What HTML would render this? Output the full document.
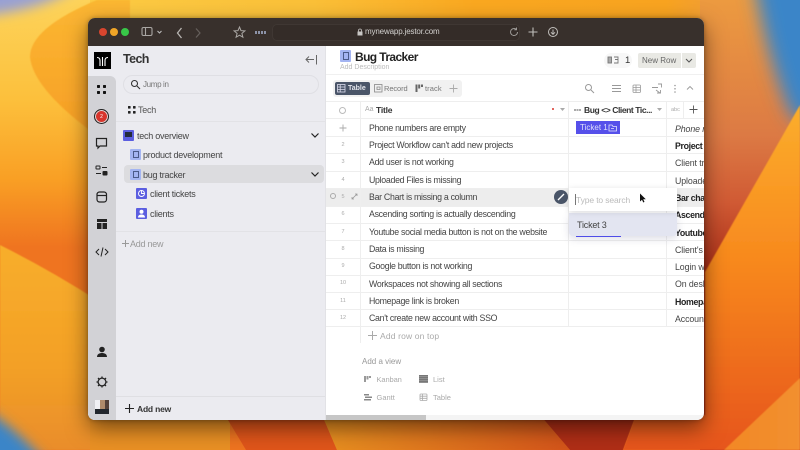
<!DOCTYPE html>
<html><head><meta charset="utf-8"><style>
html,body{margin:0;padding:0;width:800px;height:450px;overflow:hidden;background:#f09020}
*{box-sizing:border-box}
body{font-family:"Liberation Sans",sans-serif;position:relative}
#root{position:absolute;left:0;top:0;width:800px;height:450px;overflow:hidden}
.a{position:absolute}
.t{position:absolute;white-space:nowrap;line-height:12px;height:12px}
.r{font-size:8.8px;color:#444;letter-spacing:-.3px;left:369px}
.n{font-size:5.5px;color:#aaa;left:338px;width:10px;text-align:center}
.c{font-size:8.8px;color:#444;left:675px;letter-spacing:-.1px}
.b{font-weight:bold;color:#222;letter-spacing:-.35px}
.h{left:326px;right:0;height:1px;background:#eee}
.s{font-size:9px;color:#444;letter-spacing:-.25px}
.v{font-size:7.5px;color:#aaa}
#win{position:absolute;left:88px;top:18px;width:616px;height:402px;border-radius:7px;overflow:hidden;box-shadow:0 8px 22px rgba(0,0,0,.5),0 0 5px rgba(0,0,0,.3);background:#fff}
#in{position:absolute;left:-88px;top:-18px;width:800px;height:450px}
svg.i{position:absolute;overflow:visible}
</style></head><body><div id="root">
<svg class="a" style="left:0;top:0;overflow:hidden" width="800" height="450" viewBox="0 0 800 450">
<defs>
<linearGradient id="g1" x1="0" y1="0" x2="0" y2="1"><stop offset="0" stop-color="#fdd35a"/><stop offset=".22" stop-color="#fcc03c"/><stop offset=".4" stop-color="#f99f24"/><stop offset=".55" stop-color="#ef7420"/><stop offset="1" stop-color="#ef7420"/></linearGradient>
<linearGradient id="g2" x1="0" y1="0" x2="0" y2="1"><stop offset="0" stop-color="#fbb732"/><stop offset="1" stop-color="#f79f26"/></linearGradient>
<linearGradient id="g3" x1="0" y1="0" x2="0" y2="1"><stop offset="0" stop-color="#f8ae2c"/><stop offset=".6" stop-color="#f3a026"/><stop offset="1" stop-color="#e98d2c"/></linearGradient>
<linearGradient id="g4" x1="0" y1="0" x2="0" y2="1"><stop offset="0" stop-color="#ec9a40"/><stop offset=".3" stop-color="#dc7a44"/><stop offset=".45" stop-color="#d05a34"/><stop offset=".62" stop-color="#a82a15"/></linearGradient>
<linearGradient id="g5" x1="0" y1="0" x2="0" y2="1"><stop offset="0" stop-color="#fbae2c"/><stop offset=".45" stop-color="#f8891e"/><stop offset="1" stop-color="#e6551a"/></linearGradient>
<linearGradient id="g6" x1="0" y1="0" x2="1" y2="0"><stop offset="0" stop-color="#f38825"/><stop offset="1" stop-color="#f29030"/></linearGradient>
<linearGradient id="g7" x1="0" y1="0" x2="1" y2="0"><stop offset="0" stop-color="#fccb44"/><stop offset=".35" stop-color="#fbc038"/><stop offset=".6" stop-color="#faa820"/><stop offset=".9" stop-color="#f9a420"/><stop offset="1" stop-color="#ee9c3c"/></linearGradient>
<linearGradient id="g8" x1="0" y1="0" x2="1" y2="0"><stop offset="0" stop-color="#e89020"/><stop offset="1" stop-color="#d4541a"/></linearGradient>
<filter id="b4" filterUnits="userSpaceOnUse" x="-60" y="-60" width="920" height="570"><feGaussianBlur stdDeviation="6"/></filter>
<filter id="b8" filterUnits="userSpaceOnUse" x="-60" y="-60" width="920" height="570"><feGaussianBlur stdDeviation="9"/></filter>
<filter id="b1" filterUnits="userSpaceOnUse" x="-60" y="-60" width="920" height="570"><feGaussianBlur stdDeviation=".6"/></filter>
</defs>
<rect width="800" height="450" fill="url(#g1)"/>
<path d="M-20 -20H85Q50 10 -20 16Z" fill="#98a0d4" filter="url(#b4)"/>
<rect x="90" y="0" width="640" height="60" fill="url(#g7)"/>
<path d="M97 0Q30 28 30 57Q33 88 92 132L130 132V0Z" fill="url(#g2)" filter="url(#b1)"/>
<path d="M0 245Q50 270 100 302L100 450H0Z" fill="url(#g3)" filter="url(#b1)"/>
<rect x="90" y="415" width="140" height="35" fill="#e99024"/>
<path d="M225 415H322L337 450H246Z" fill="#e0551a"/>
<path d="M322 415H540L570 450H337Z" fill="url(#g8)"/>
<path d="M540 415H636L623 450H570Z" fill="#b02e16"/>
<path d="M-30 400Q15 425 52 470H-30Z" fill="#3a85c8" filter="url(#b4)"/>
<rect x="700" y="0" width="100" height="450" fill="url(#g4)"/>
<path d="M752 -30H840V130L792 118Q767 60 752 -30Z" fill="#3a85c8" filter="url(#b8)"/>
<path d="M800 105L705 272V415L636 415L623 450H800Z" fill="url(#g5)" filter="url(#b1)"/>
<path d="M800 378L724 450H800Z" fill="url(#g6)" filter="url(#b1)"/>
</svg>

<div id="win"><div id="in">
<!-- title bar -->
<div class="a" style="left:88px;top:18px;width:616px;height:28px;background:#38302c"></div>
<div class="a" style="left:99px;top:28px;width:8px;height:8px;border-radius:50%;background:#d8452e"></div>
<div class="a" style="left:110px;top:28px;width:8px;height:8px;border-radius:50%;background:#f0a527"></div>
<div class="a" style="left:121px;top:28px;width:8px;height:8px;border-radius:50%;background:#38c748"></div>
<svg class="i" style="left:140px;top:25px" width="100" height="16" fill="none" stroke="#aaa7a4" stroke-width="1.1">
<rect x="2" y="2.5" width="10" height="8" rx="1.5"/><path d="M5.500 2.500v8"/><path d="M17.500 6l2 2 2-2" stroke="#bbb"/>
<path d="M41.500 3l-4 5 4 5" stroke-width="1.3" stroke="#b8b5b2"/><path d="M56 3.500l4 4.500-4 4.500" stroke="#66605c" stroke-width="1.2"/></svg>
<svg class="i" style="left:232px;top:24px" width="16" height="16" fill="none" stroke="#aaa7a4" stroke-width="1"><path d="M7.500 3l1.500 3.600 3.900.3-3 2.500 1 3.800-3.400-2-3.400 2 1-3.800-3-2.500 3.900-.3z"/></svg>
<div class="a" style="left:255px;top:31px;width:11px;height:3px;background:repeating-linear-gradient(90deg,#8c93a8 0 2px,transparent 2px 3px)"></div>
<div class="a" style="left:272px;top:24px;width:248px;height:17px;border-radius:5px;background:#342c28;border:1px solid #3f3733"></div>
<svg class="i" style="left:356px;top:28px" width="8" height="9"><rect x="1.500" y="3.500" width="5" height="4" fill="#c8c6c4"/><path d="M2.500 3.500V2.500a1.500 1.500 0 013 0v1" fill="none" stroke="#c8c6c4" stroke-width=".8"/></svg>
<div class="t" style="left:365px;top:26px;font-size:8px;letter-spacing:-.15px;color:#d2d0ce">mynewapp.jestor.com</div>
<svg class="i" style="left:508px;top:26px" width="12" height="12" fill="none" stroke="#9d9a97" stroke-width="1"><path d="M9.500 6a3.500 3.500 0 11-1.200-2.600M8.500 1.500v2.200H6.300"/></svg>
<svg class="i" style="left:527px;top:26px" width="12" height="12" fill="none" stroke="#c0bebb" stroke-width="1.1"><path d="M6 1.500v9M1.500 6h9"/></svg>
<svg class="i" style="left:546px;top:25px" width="14" height="14" fill="none" stroke="#c0bebb" stroke-width="1"><circle cx="7" cy="7" r="4.500"/><path d="M7 4.500v4.500M5 7.300l2 2 2-2"/></svg>

<!-- rail -->
<div class="a" style="left:88px;top:46px;width:28px;height:374px;background:#ebebf0"></div>
<div class="a" style="left:88px;top:76px;width:28px;height:344px;background:#d2d2d6;border-radius:0 6px 0 0"></div>
<div class="a" style="left:94px;top:52px;width:17px;height:17px;background:#000"></div>
<svg class="i" style="left:94px;top:52px" width="17" height="17" fill="none" stroke="#fff" stroke-width="1.100"><path d="M3 5.500c2 0 3 .8 3 3V14M8.500 5v9M14 5.500c-2 0-3 .8-3 3V14"/></svg>
<svg class="i" style="left:95px;top:83px" width="14" height="14" fill="#111"><rect x="2" y="2" width="3" height="3" rx=".7"/><rect x="8" y="2" width="3" height="3" rx=".7"/><rect x="2" y="8" width="3" height="3" rx=".7"/><rect x="8" y="8" width="3" height="3" rx=".7"/></svg>
<div class="a" style="left:94px;top:109px;width:15px;height:15px;border-radius:50%;background:#d8352c;border:1.200px solid #222;box-shadow:inset 0 0 0 1px #ddd"></div>
<div class="t" style="left:94px;top:110.500px;width:15px;text-align:center;font-size:5px;color:#fff">2</div>
<svg class="i" style="left:95px;top:137px" width="14" height="14" fill="none" stroke="#222" stroke-width="1.200"><path d="M1.500 1.500h10v7.500H5l-2 2V9H1.500z"/></svg>
<svg class="i" style="left:95px;top:164px" width="14" height="14" fill="none" stroke="#222" stroke-width="1"><rect x="1" y="2" width="4" height="3" rx=".5"/><path d="M7 3.500h5M1 9.500h5"/><rect x="8" y="7.500" width="4" height="3.500" rx=".5" fill="#222"/></svg>
<svg class="i" style="left:95px;top:190px" width="14" height="14" fill="none" stroke="#222" stroke-width="1.200"><rect x="2" y="2" width="9.500" height="10" rx="2.500"/><path d="M2 5.500h9.500"/></svg>
<svg class="i" style="left:95px;top:217px" width="14" height="14" fill="#222"><rect x="2" y="2" width="10" height="3"/><rect x="2" y="6" width="4.500" height="6"/><rect x="7.500" y="6" width="4.500" height="6"/></svg>
<svg class="i" style="left:95px;top:245px" width="14" height="14" fill="none" stroke="#222" stroke-width="1"><path d="M4 4L1 7l3 3M10 4l3 3-3 3M8 2.500L6 11.500"/></svg>
<svg class="i" style="left:95px;top:345px" width="14" height="14" fill="#222"><circle cx="7" cy="4.500" r="2.800"/><path d="M2 12c0-3 2.500-4 5-4s5 1 5 4z"/></svg>
<svg class="i" style="left:95px;top:375px" width="14" height="14" fill="none" stroke="#222" stroke-width="1.300"><circle cx="7" cy="7" r="3.900"/><path d="M7 1.500v1.500M7 11v1.500M1.500 7H3M11 7h1.500M3 3l1 1M10 10l1 1M3 11l1-1M10 4l1-1"/></svg>
<div class="a" style="left:95px;top:400px;width:14px;height:14px;background:linear-gradient(90deg,#f0f0f4 0 35%,#b08a6a 35% 70%,#544038 70%)"></div>
<div class="a" style="left:95px;top:409px;width:14px;height:5px;background:#22262c"></div>

<!-- side panel -->
<div class="a" style="left:116px;top:46px;width:210px;height:374px;background:#ebebf0;border-right:1px solid #e2e2e6"></div>
<div class="t" style="left:123px;top:53px;font-size:12.500px;font-weight:bold;color:#333;letter-spacing:-.6px">Tech</div>
<svg class="i" style="left:305px;top:53px" width="14" height="14" fill="none" stroke="#666" stroke-width="1"><path d="M1 6.500h8M4 3.500L1 6.500l3 3M11.500 2v9.500"/></svg>
<div class="a" style="left:123px;top:75px;width:196px;height:19px;border-radius:10px;border:1px solid #dfdfe4"></div>
<svg class="i" style="left:130px;top:79px" width="11" height="11" fill="none" stroke="#333" stroke-width="1.100"><circle cx="4.500" cy="4.500" r="3"/><path d="M7 7l3 3"/></svg>
<div class="t" style="left:143px;top:79px;font-size:8px;color:#777;letter-spacing:-.35px">Jump in</div>
<svg class="i" style="left:127px;top:105px" width="10" height="10" fill="#222"><rect x="1" y="1" width="2.600" height="2.600" rx=".5"/><rect x="6" y="1" width="2.600" height="2.600" rx=".5"/><rect x="1" y="6" width="2.600" height="2.600" rx=".5"/><rect x="6" y="6" width="2.600" height="2.600" rx=".5"/></svg>
<div class="t s" style="left:138px;top:103.500px;color:#555">Tech</div>
<div class="a" style="left:116px;top:121px;width:209px;height:1px;background:#e2e2e6"></div>

<div class="a" style="left:123px;top:130px;width:11px;height:11px;background:#5b5ee0;border-radius:1px"></div>
<div class="a" style="left:125px;top:132px;width:7px;height:5px;background:#222a3c"></div>
<div class="t s" style="left:137px;top:129.500px">tech overview</div>
<svg class="i" style="left:310px;top:132px" width="10" height="7" fill="none" stroke="#222" stroke-width="1.200"><path d="M1.500 1.500L5 5l3.500-3.500"/></svg>

<div class="a" style="left:130px;top:149px;width:11px;height:11px;background:#a3b4f2;border-radius:1px"></div>
<div class="a" style="left:132.500px;top:151px;width:6px;height:7px;border:1px solid #4a5a8a"></div>
<div class="t s" style="left:143px;top:149px">product development</div>

<div class="a" style="left:124px;top:165px;width:200px;height:18px;background:#dcdcdf;border-radius:4px"></div>
<div class="a" style="left:130px;top:169px;width:11px;height:11px;background:#a3b4f2;border-radius:1px"></div>
<div class="a" style="left:132.500px;top:171px;width:6px;height:7px;border:1px solid #4a5a8a"></div>
<div class="t s" style="left:143px;top:168.500px">bug tracker</div>
<svg class="i" style="left:310px;top:171px" width="10" height="7" fill="none" stroke="#222" stroke-width="1.200"><path d="M1.500 1.500L5 5l3.500-3.500"/></svg>

<div class="a" style="left:136px;top:188px;width:11px;height:11px;background:#5b5ee0;border-radius:1px"></div>
<svg class="i" style="left:136px;top:188px" width="11" height="11" fill="none" stroke="#fff" stroke-width=".9"><circle cx="5.500" cy="5.500" r="3"/><path d="M5.500 2.500v3h3"/></svg>
<div class="t s" style="left:150px;top:188px">client tickets</div>
<div class="a" style="left:136px;top:208px;width:11px;height:11px;background:#5b5ee0;border-radius:1px"></div>
<svg class="i" style="left:136px;top:208px" width="11" height="11" fill="#fff"><circle cx="5.500" cy="3.800" r="2"/><path d="M2 9.500c0-2 1.500-3 3.500-3s3.500 1 3.500 3z"/></svg>
<div class="t s" style="left:150px;top:207.500px">clients</div>
<div class="a" style="left:116px;top:231px;width:209px;height:1px;background:#e2e2e6"></div>
<svg class="i" style="left:121px;top:239px" width="9" height="9" fill="none" stroke="#999" stroke-width="1"><path d="M4.500 1v7M1 4.500h7"/></svg>
<div class="t s" style="left:130px;top:237.500px;color:#999">Add new</div>
<div class="a" style="left:116px;top:396px;width:209px;height:1px;background:#dfdfe3"></div>
<svg class="i" style="left:124px;top:403px" width="11" height="11" fill="none" stroke="#222" stroke-width="1.100"><path d="M5.500 1v9M1 5.500h9"/></svg>
<div class="t" style="left:137px;top:402.500px;font-size:8.500px;font-weight:bold;color:#333;letter-spacing:-.2px">Add new</div>

<!-- main header -->
<div class="a" style="left:340px;top:50px;width:11px;height:12px;background:#a3b4f2;border-radius:1px"></div>
<div class="a" style="left:342.500px;top:52px;width:6px;height:8px;border:1px solid #4a5a8a"></div>
<div class="t" style="left:355px;top:50.500px;font-size:12px;font-weight:bold;color:#222;letter-spacing:-.6px">Bug Tracker</div>
<div class="t" style="left:340px;top:62px;font-size:7px;color:#bbb">Add Description</div>
<div class="a" style="left:604px;top:53px;width:28px;height:15px;background:#f7f7f7;border-radius:8px"></div>
<svg class="i" style="left:607px;top:55px" width="14" height="11" fill="none" stroke="#777" stroke-width=".9"><rect x="1" y="2" width="3.500" height="6" fill="#aaa"/><path d="M7 2h4v2.500H8M11 4.500v3.500H7"/></svg>
<div class="t" style="left:625px;top:55px;font-size:9.500px;color:#333">1</div>
<div class="a" style="left:638px;top:53px;width:43px;height:15px;background:#e9e9e4;border-radius:2px 0 0 2px"></div>
<div class="t" style="left:642px;top:55px;font-size:8px;color:#666">New Row</div>
<div class="a" style="left:682px;top:53px;width:14px;height:15px;background:#e9e9e4;border-radius:0 2px 2px 0"></div>
<svg class="i" style="left:685px;top:58px" width="8" height="6" fill="none" stroke="#555" stroke-width="1"><path d="M1 1l3 3 3-3"/></svg>
<div class="a" style="left:326px;top:74px;width:378px;height:1px;background:#f0f0f0"></div>

<!-- tabs -->
<div class="a" style="left:333px;top:80px;width:129px;height:17px;background:#f1f1f1;border-radius:3px"></div>
<div class="a" style="left:335px;top:82px;width:35px;height:13px;background:#4a5568;border-radius:2px"></div>
<svg class="i" style="left:337px;top:84px" width="9" height="9" fill="none" stroke="#dde" stroke-width=".8"><rect x=".5" y=".5" width="7.500" height="7.500"/><path d="M.5 3h7.500M.5 5.500h7.500M3.200 .5v7.500"/></svg>
<div class="t" style="left:348px;top:83px;font-size:7px;font-weight:bold;color:#e4e6ec">Table</div>
<svg class="i" style="left:374px;top:84px" width="9" height="9" fill="none" stroke="#888" stroke-width=".8"><rect x=".5" y=".5" width="7.500" height="7.500"/><path d="M3 3h3v2.500H3z"/></svg>
<div class="t" style="left:384px;top:83px;font-size:7.500px;color:#777;letter-spacing:-.1px">Record</div>
<svg class="i" style="left:415px;top:84px" width="9" height="9" fill="#666"><rect x=".5" y=".5" width="2" height="7.500"/><rect x="3.200" y=".5" width="2" height="4"/><rect x="6" y=".5" width="2" height="2.500"/></svg>
<div class="t" style="left:425px;top:83px;font-size:7.500px;color:#777;letter-spacing:.1px">track</div>
<svg class="i" style="left:449px;top:84px" width="9" height="9" fill="none" stroke="#aaa" stroke-width=".9"><path d="M4.500 .5v8M.5 4.500h8"/></svg>
<svg class="i" style="left:584px;top:83px" width="11" height="11" fill="none" stroke="#999" stroke-width="1"><circle cx="4.500" cy="4.500" r="3"/><path d="M7 7l3 3"/></svg>
<svg class="i" style="left:611px;top:83px" width="11" height="11" fill="none" stroke="#999" stroke-width=".9"><path d="M1 2.500h9M1 5.500h9M1 8.500h9"/></svg>
<svg class="i" style="left:632px;top:84px" width="10" height="10" fill="none" stroke="#999" stroke-width=".8"><rect x="1" y="1" width="7.500" height="7.500" rx="1"/><path d="M1 3.500h7.500M1 6h7.500M4 1v7.500"/></svg>
<svg class="i" style="left:651px;top:83px" width="12" height="11" fill="none" stroke="#999" stroke-width=".9"><path d="M1 4.500h6M7 1h3.500v3.500M5 7l4 3M6 10h3.500V7"/></svg>
<svg class="i" style="left:673px;top:84px" width="4" height="10" fill="#999"><circle cx="2" cy="1.500" r=".8"/><circle cx="2" cy="4.800" r=".8"/><circle cx="2" cy="8" r=".8"/></svg>
<svg class="i" style="left:686px;top:85px" width="8" height="6" fill="none" stroke="#999" stroke-width=".9"><path d="M1 4.500l3-3 3 3"/></svg>

<!-- table -->
<div class="a" style="left:326px;top:101px;width:378px;height:1px;background:#eee"></div>
<div class="a" style="left:326px;top:188px;width:243px;height:18px;background:#ededed"></div>
<div class="a" style="left:666px;top:188px;width:38px;height:18px;background:#ededed"></div>
<div class="a h" style="top:118px"></div><div class="a h" style="top:136px"></div><div class="a h" style="top:153px"></div><div class="a h" style="top:171px"></div><div class="a h" style="top:188px"></div><div class="a h" style="top:206px"></div><div class="a h" style="top:223px"></div><div class="a h" style="top:240px"></div><div class="a h" style="top:258px"></div><div class="a h" style="top:275px"></div><div class="a h" style="top:292px"></div><div class="a h" style="top:309px"></div><div class="a h" style="top:326px"></div>
<div class="a" style="left:360px;top:102px;width:1px;height:241px;background:#eee"></div>
<div class="a" style="left:568px;top:102px;width:1px;height:224px;background:#eee"></div>
<div class="a" style="left:666px;top:102px;width:1px;height:224px;background:#eee"></div>
<div class="a" style="left:683px;top:102px;width:1px;height:16px;background:#eee"></div>

<div class="a" style="left:339px;top:107px;width:7px;height:7px;border-radius:50%;border:1px solid #bbb"></div>
<div class="t" style="left:365px;top:104px;font-size:7px;color:#aaa">Aa</div>
<div class="t" style="left:376px;top:104px;font-size:8.500px;font-weight:bold;color:#333;letter-spacing:-.2px">Title</div>
<div class="a" style="left:552px;top:108px;width:2px;height:2px;background:#d8352c;border-radius:50%"></div>
<svg class="i" style="left:560px;top:108px" width="6" height="4" fill="#aaa"><path d="M0 0h5L2.500 3z"/></svg>
<div class="a" style="left:574px;top:109px;width:7px;height:1.500px;background:repeating-linear-gradient(90deg,#aaa 0 2px,transparent 2px 2.500px)"></div>
<div class="t" style="left:584px;top:104px;font-size:8.500px;font-weight:bold;color:#333;letter-spacing:-.42px">Bug &lt;&gt; Client Tic...</div>
<svg class="i" style="left:657px;top:108px" width="6" height="4" fill="#aaa"><path d="M0 0h5L2.500 3z"/></svg>
<div class="t" style="left:671px;top:104px;font-size:5.500px;color:#aaa">abc</div>
<svg class="i" style="left:689px;top:105px" width="9" height="9" fill="none" stroke="#555" stroke-width=".9"><path d="M4.500 .5v8M.5 4.500h8"/></svg>

<svg class="i" style="left:339px;top:124px" width="8" height="8" fill="none" stroke="#aaa" stroke-width=".9"><path d="M4 .5v7M.5 4h7"/></svg>
<div class="t n" style="top:139px">2</div><div class="t n" style="top:156px">3</div><div class="t n" style="top:174px">4</div><div class="t n" style="top:191px">5</div><div class="t n" style="top:208px">6</div><div class="t n" style="top:226px">7</div><div class="t n" style="top:243px">8</div><div class="t n" style="top:260px">9</div><div class="t n" style="top:277px">10</div><div class="t n" style="top:295px">11</div><div class="t n" style="top:312px">12</div>
<div class="a" style="left:330px;top:193px;width:6px;height:6px;border-radius:50%;border:1px solid #aaa"></div>
<svg class="i" style="left:351px;top:193px" width="7" height="7" fill="none" stroke="#999" stroke-width=".8"><path d="M1 6l5-5M4 1h2v2M1 4v2h2"/></svg>

<div class="t r" style="top:122px">Phone numbers are empty</div>
<div class="t r" style="top:139px">Project Workflow can't add new projects</div>
<div class="t r" style="top:156px">Add user is not working</div>
<div class="t r" style="top:174px">Uploaded Files is missing</div>
<div class="t r" style="top:191px">Bar Chart is missing a column</div>
<div class="t r" style="top:208px">Ascending sorting is actually descending</div>
<div class="t r" style="top:226px">Youtube social media button is not on the website</div>
<div class="t r" style="top:243px">Data is missing</div>
<div class="t r" style="top:260px">Google button is not working</div>
<div class="t r" style="top:277.500px">Workspaces not showing all sections</div>
<div class="t r" style="top:295px">Homepage link is broken</div>
<div class="t r" style="top:312px">Can't create new account with SSO</div>

<div class="t c" style="top:123px;font-style:italic">Phone numbers</div>
<div class="t c b" style="top:140px">Project Workflow</div>
<div class="t c" style="top:157px">Client tried</div>
<div class="t c" style="top:175px">Uploaded</div>
<div class="t c b" style="top:192px">Bar chart</div>
<div class="t c b" style="top:209px">Ascending</div>
<div class="t c b" style="top:227px">Youtube</div>
<div class="t c" style="top:244px">Client's data</div>
<div class="t c" style="top:261px">Login with</div>
<div class="t c" style="top:278px">On desktop</div>
<div class="t c b" style="top:296px">Homepage</div>
<div class="t c" style="top:313px">Account</div>

<div class="a" style="left:576px;top:121px;width:44px;height:13px;background:#5650ea"></div>
<div class="t" style="left:580px;top:121.500px;font-size:8px;color:#dfe0fb">Ticket 1</div>
<svg class="i" style="left:608px;top:123px" width="10" height="9" fill="none" stroke="#e4e5fc" stroke-width=".8"><path d="M1 2h3l1 1.500h3.500V8H1zM3 5.500h3"/></svg>

<svg class="i" style="left:367px;top:330px" width="11" height="11" fill="none" stroke="#aaa" stroke-width="1"><path d="M5.500 1v9M1 5.500h9"/></svg>
<div class="t" style="left:380px;top:329.500px;font-size:8.500px;color:#aaa;letter-spacing:.15px">Add row on top</div>
<div class="t" style="left:362px;top:355.500px;font-size:8px;color:#999">Add a view</div>
<svg class="i" style="left:364px;top:375px" width="9" height="8" fill="#999"><rect x="0" y="1" width="2" height="6"/><rect x="2.500" y="1" width="2" height="3.500"/><rect x="5" y="1" width="2" height="2"/></svg>
<div class="t v" style="left:376.500px;top:373.500px;letter-spacing:-.1px">Kanban</div>
<div class="a" style="left:419px;top:375px;width:9px;height:8px;background:repeating-linear-gradient(180deg,#777 0 1.400px,#aaa 1.400px 2px)"></div>
<div class="t v" style="left:433px;top:373.500px">List</div>
<svg class="i" style="left:363px;top:393px" width="10" height="9" fill="#888"><rect x="1" y="1" width="5" height="1.500"/><rect x="2" y="3.500" width="7" height="1.500"/><rect x="1" y="6" width="7" height="1.500"/></svg>
<div class="t v" style="left:376.500px;top:391.500px">Gantt</div>
<svg class="i" style="left:419px;top:393px" width="10" height="9" fill="none" stroke="#aaa" stroke-width=".8"><rect x="1" y="1" width="7" height="6.500" rx=".8"/><path d="M1 3.200h7M1 5.300h7M3.500 1v6.500"/></svg>
<div class="t v" style="left:433px;top:391.500px">Table</div>

<!-- popup -->
<div class="a" style="left:553.500px;top:189.500px;width:14px;height:14px;border-radius:50%;background:#4a5568"></div>
<svg class="i" style="left:553.500px;top:189.500px" width="14" height="14" fill="none" stroke="#fff" stroke-width="1.300"><path d="M4 10L10 4"/></svg>
<div class="a" style="left:569px;top:213px;width:108px;height:23px;background:#e3e5f1;border-radius:0 0 4px 4px;box-shadow:0 3px 8px rgba(80,80,120,.18)"></div>
<div class="a" style="left:569px;top:188px;width:108px;height:23px;background:#fff;box-shadow:0 1px 6px rgba(0,0,0,.13)"></div>
<div class="a" style="left:575px;top:194px;width:1px;height:11px;background:#777"></div>
<div class="t" style="left:576px;top:193.500px;font-size:8.500px;color:#bbb;letter-spacing:-.12px">Type to search</div>
<svg class="i" style="left:639px;top:193px" width="8" height="11" fill="#111"><path d="M1 .5v8l2-1.800 1.300 2.800 1.200-.6-1.300-2.700h2.600z"/></svg>
<div class="t" style="left:577px;top:219px;font-size:9px;color:#444;letter-spacing:-.2px">Ticket 3</div>
<div class="a" style="left:576px;top:235.500px;width:45px;height:1.500px;background:#4f4ce8"></div>

<!-- scrollbar -->
<div class="a" style="left:326px;top:415px;width:378px;height:5px;background:#f4f4f4"></div>
<div class="a" style="left:326px;top:415px;width:100px;height:5px;background:#c6c6c6"></div>
</div></div>
</div></body></html>
